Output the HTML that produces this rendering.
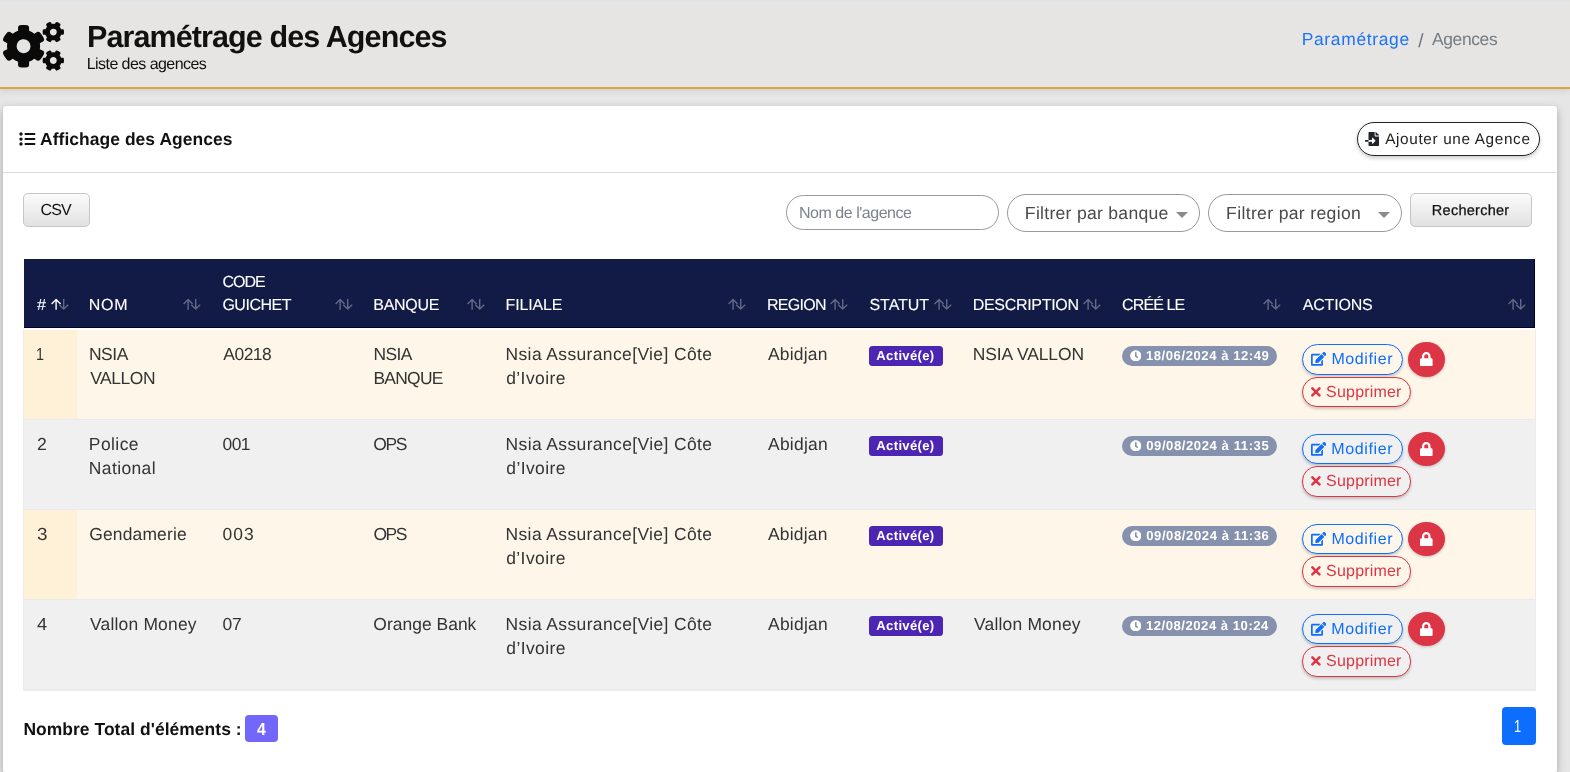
<!DOCTYPE html>
<html lang="fr">
<head>
<meta charset="utf-8">
<title>Paramétrage des Agences</title>
<style>
*{box-sizing:border-box;margin:0;padding:0}
html,body{width:1570px;height:772px;overflow:hidden}
body{background:#e6e6e6;font-family:"Liberation Sans",sans-serif;color:#333;position:relative;text-rendering:geometricPrecision}
.abs{position:absolute}
.nw{white-space:nowrap}
/* header */
#hdr{left:0;top:0;width:1570px;height:89px;background:#e6e5e3;border-bottom:2px solid #d6a646;box-shadow:0 2px 6px rgba(0,0,0,.10)}
#hdrtop{left:0;top:0;width:1570px;height:6px;background:linear-gradient(#e3e3e3 0,#e3e3e3 2px,#e6e6e6 2px,#e6e6e6 5px,#e6e5e3 6px)}
#title{left:87px;top:19px;font-size:30.5px;font-weight:700;color:#111;line-height:36px;letter-spacing:-.07px}
#subtitle{left:87px;top:54px;font-size:16px;color:#111;line-height:20px;letter-spacing:.16px}
#bc1{left:1301px;top:28px;font-size:17.44px;color:#1a73fb;line-height:22px;letter-spacing:.85px}
#bcs{left:1417px;top:30.5px;font-size:19px;color:#6c757d;line-height:22px}
#bc2{left:1431px;top:28px;font-size:17.44px;color:#757c84;line-height:22px;letter-spacing:.45px}
/* card */
#card{left:2.9px;top:105.9px;width:1553.7px;height:667px;background:#fff;border-radius:3.5px;box-shadow:0 3px 9px rgba(0,0,0,.28)}
#cardline{left:3px;top:172px;width:1553px;height:1px;background:#dcdcdc}
#ctitle{left:41px;top:128px;font-size:17.44px;font-weight:700;color:#111;line-height:22px;letter-spacing:.05px}
#addbtn{left:1357px;top:122px;width:183px;height:33.5px;border:1px solid #212529;border-radius:17px;background:#fff;box-shadow:0 2px 4px rgba(0,0,0,.22)}
#addtxt{left:1385px;top:129px;font-size:15.3px;color:#222;line-height:20px;letter-spacing:1.1px}
/* toolbar */
.gbtn{border:1px solid #c6c6c6;border-radius:5px;background:linear-gradient(#fbfbfb,#e1e1e1)}
#csv{left:23px;top:193px;width:67px;height:33.6px}
#csvt{left:40px;top:200px;font-size:16px;color:#111;line-height:20px;letter-spacing:1.2px}
#rech{left:1410px;top:193px;width:121.6px;height:33.6px}
#recht{left:1432px;top:200px;font-size:14.53px;color:#111;line-height:20px;letter-spacing:.15px;-webkit-text-stroke:.25px #111}
#inp{left:786px;top:195px;width:213px;height:34.6px;border:1px solid #9a9a9a;border-radius:18px;background:#fff}
#inpt{left:799px;top:203px;font-size:16px;color:#7b838c;line-height:20px;letter-spacing:.2px}
.sel{top:194px;height:37.7px;border:1px solid #9a9a9a;border-radius:19px;background:#fff}
#sel1{left:1007.3px;width:192.6px}
#sel2{left:1208.4px;width:193.5px}
.selt{top:202px;font-size:17.6px;color:#4a4a4a;line-height:22px;letter-spacing:.75px}
.caret{width:0;height:0;border-left:6px solid transparent;border-right:6px solid transparent;border-top:6px solid #8a8a8a;top:212px}
/* table */
#thead{left:24px;top:259px;width:1511px;height:69px;background:#121b46;border-bottom:1px solid #00002e;border-right:1px solid #00002e}
.th{color:#fff;-webkit-text-stroke:.1px #fff;font-size:16px;font-weight:400;line-height:22px;letter-spacing:.75px;top:294px}
.row{left:24px;width:1511px;border-bottom:1px solid #e9e9ee}
.odd{background:#fff6ea}
.even{background:#f0f0f0}
.s1{left:24px;width:53px;background:#fff0d8}
.td{font-size:17.44px;color:#333;line-height:24px;letter-spacing:.6px}
.bact{width:74px;height:20px;border-radius:3.5px;background:#4c25b2;left:869px}
.bactt{color:#fff;font-size:13.08px;font-weight:700;line-height:20px;letter-spacing:.2px;left:877px}
.bdate{left:1122px;width:155px;height:20px;border-radius:10px;background:#8691ad}
.bdatet{left:1146px;color:#fff;font-size:13.08px;font-weight:700;line-height:20px;letter-spacing:.3px}
.bmod{left:1302px;width:101px;height:31px;border:1px solid #0d6efd;border-radius:16px;box-shadow:0 2px 3px rgba(0,0,0,.2)}
.bmodt{left:1331px;color:#0d6efd;font-size:16px;line-height:20px;letter-spacing:1px}
.bsup{left:1302px;width:109px;height:30px;border:1px solid #dc3545;border-radius:15px;box-shadow:0 2px 3px rgba(0,0,0,.2)}
.bsupt{left:1326px;color:#dc3545;font-size:16px;line-height:20px;letter-spacing:1px}
.block{left:1408px;width:37px;height:35.3px;border-radius:50%;background:#dc3545;box-shadow:0 1px 3px rgba(0,0,0,.22)}
.bgo{background:#fff6ea}
.bge{background:#f0f0f0}
/* footer */
#tot{left:24px;top:718px;font-size:17.44px;font-weight:700;color:#111;line-height:22px;letter-spacing:.3px}
#totbg{left:245px;top:715px;width:33px;height:26.7px;border-radius:4px;background:#7267fa}
#totb{left:256px;top:718px;color:#fff;font-size:17.44px;font-weight:700;line-height:22px}
#pgbg{left:1502px;top:707px;width:34px;height:38px;border-radius:4px;background:#0d6efd}
#pg{left:1514px;top:715px;color:#fff;font-size:17.44px;line-height:22px}
</style>
</head>
<body>
<div id="root" class="abs" style="left:0;top:0;width:1570px;height:772px;overflow:hidden;will-change:transform">
<!-- HEADER -->
<div id="hdr" class="abs"></div>
<div id="hdrtop" class="abs"></div>
<svg class="abs" style="left:3px;top:22.4px" width="61" height="48.8" viewBox="0 0 640 512"><path fill="#0a0a0a" d="M512.1 191l-8.2 14.3c-3 5.300-9.400 7.500-15.100 5.400-11.800-4.400-22.600-10.700-32.100-18.600-4.600-3.800-5.800-10.500-2.800-15.700l8.200-14.300c-6.900-8-12.300-17.300-15.900-27.400h-16.500c-6 0-11.200-4.300-12.200-10.300-2-12-2.100-24.600 0-37.100 1-6 6.200-10.400 12.200-10.400h16.500c3.600-10.100 9-19.400 15.900-27.400l-8.200-14.300c-3-5.200-1.900-11.900 2.800-15.700 9.500-7.900 20.400-14.200 32.100-18.600 5.700-2.100 12.100.1 15.100 5.400l8.200 14.300c10.500-1.900 21.200-1.900 31.700 0L552 6.300c3-5.300 9.400-7.500 15.100-5.400 11.800 4.400 22.600 10.700 32.100 18.600 4.600 3.800 5.800 10.500 2.800 15.700l-8.200 14.300c6.900 8 12.300 17.300 15.900 27.400h16.500c6 0 11.200 4.300 12.200 10.300 2 12 2.100 24.600 0 37.100-1 6-6.200 10.400-12.200 10.400h-16.500c-3.600 10.100-9 19.400-15.900 27.400l8.200 14.300c3 5.200 1.900 11.900-2.800 15.700-9.500 7.900-20.400 14.200-32.100 18.600-5.700 2.100-12.100-.1-15.100-5.400l-8.200-14.300c-10.400 1.900-21.200 1.900-31.700 0zm-10.500-58.800c38.500 29.600 82.400-14.300 52.800-52.800-38.500-29.700-82.400 14.300-52.800 52.800zM386.300 286.100l33.700 16.800c10.100 5.800 14.500 18.100 10.500 29.100-8.900 24.200-26.400 46.400-42.600 65.800-7.400 8.900-20.200 11.100-30.300 5.300l-29.100-16.800c-16 13.700-34.600 24.600-54.900 31.700v33.600c0 11.600-8.300 21.600-19.700 23.600-24.600 4.200-50.400 4.400-75.900 0-11.500-2-20-11.900-20-23.600V418c-20.300-7.200-38.900-18-54.900-31.700L74 403c-10 5.800-22.900 3.600-30.300-5.300-16.200-19.400-33.300-41.600-42.200-65.700-4-10.900.4-23.200 10.500-29.100l33.300-16.800c-3.900-20.900-3.900-42.400 0-63.400L12 205.800c-10.100-5.800-14.600-18.100-10.500-29 8.900-24.200 26-46.400 42.200-65.800 7.400-8.900 20.200-11.100 30.300-5.300l29.100 16.800c16-13.700 34.600-24.600 54.900-31.700V57.100c0-11.500 8.200-21.500 19.600-23.500 24.600-4.200 50.500-4.400 76-.1 11.500 2 20 11.900 20 23.600v33.600c20.300 7.200 38.900 18 54.900 31.700l29.100-16.800c10-5.800 22.900-3.600 30.300 5.300 16.200 19.400 33.200 41.600 42.100 65.800 4 10.900.1 23.200-10 29.100l-33.700 16.800c3.900 21 3.900 42.500 0 63.500zm-117.600 21.100c59.200-77-28.700-164.900-105.700-105.700-59.200 77 28.700 164.900 105.700 105.700zm243.400 182.700l-8.200 14.300c-3 5.300-9.400 7.500-15.100 5.400-11.800-4.400-22.600-10.700-32.100-18.600-4.600-3.800-5.800-10.500-2.800-15.700l8.200-14.300c-6.900-8-12.300-17.300-15.900-27.400h-16.500c-6 0-11.200-4.300-12.200-10.300-2-12-2.100-24.600 0-37.100 1-6 6.200-10.400 12.200-10.400h16.500c3.600-10.100 9-19.400 15.900-27.400l-8.200-14.300c-3-5.200-1.900-11.900 2.800-15.700 9.500-7.900 20.400-14.200 32.100-18.600 5.700-2.100 12.100.1 15.100 5.400l8.200 14.300c10.500-1.900 21.200-1.900 31.700 0l8.200-14.300c3-5.300 9.400-7.500 15.100-5.400 11.800 4.400 22.600 10.700 32.100 18.600 4.600 3.800 5.800 10.500 2.800 15.700l-8.200 14.300c6.900 8 12.300 17.300 15.900 27.400h16.500c6 0 11.200 4.300 12.200 10.300 2 12 2.100 24.600 0 37.100-1 6-6.200 10.400-12.200 10.400h-16.500c-3.600 10.100-9 19.400-15.900 27.400l8.200 14.300c3 5.200 1.900 11.900-2.800 15.700-9.500 7.900-20.400 14.200-32.100 18.600-5.700 2.100-12.100-.1-15.100-5.400l-8.200-14.300c-10.400 1.900-21.200 1.900-31.700 0zM501.600 431c38.500 29.600 82.400-14.300 52.800-52.800-38.500-29.600-82.400 14.300-52.800 52.800z"/></svg>
<div id="title" class="abs nw" style="letter-spacing:-0.898px;left:86.95px;top:18.96px">Paramétrage des Agences</div>
<div id="subtitle" class="abs nw" style="letter-spacing:-0.557px;left:86.73px;top:54.68px">Liste des agences</div>
<div id="bc1" class="abs nw" style="letter-spacing:0.667px;left:1301.69px;top:28.19px">Paramétrage</div>
<div id="bcs" class="abs nw" style="left:1418.16px">/</div>
<div id="bc2" class="abs nw" style="letter-spacing:-0.366px;left:1431.99px;top:28.19px">Agences</div>

<!-- CARD -->
<div id="card" class="abs"></div>
<div id="cardline" class="abs"></div>
<svg class="abs" style="left:19px;top:132px" width="17" height="14" viewBox="0 0 17 14"><g fill="#111"><circle cx="2" cy="2" r="1.7"/><circle cx="2" cy="7.1" r="1.7"/><circle cx="2" cy="12" r="1.7"/><rect x="5.5" y="1.05" width="10.9" height="1.9" rx=".9"/><rect x="5.5" y="6.1" width="10.9" height="1.9" rx=".9"/><rect x="5.5" y="11" width="10.9" height="1.9" rx=".9"/></g></svg>
<div id="ctitle" class="abs nw" style="letter-spacing:0.057px;left:40.05px;top:128.08px">Affichage des Agences</div>
<div id="addbtn" class="abs"></div>
<svg class="abs" style="left:1364.9px;top:132px" width="14" height="14" viewBox="0 0 512 512"><path fill="#212529" d="M16 288c-8.800 0-16 7.200-16 16v32c0 8.800 7.200 16 16 16h112v-64zm489-183L407.100 7c-4.500-4.500-10.600-7-17-7H384v128h128v-6.100c0-6.300-2.500-12.400-7-16.900zm-153 31V0H152c-13.300 0-24 10.700-24 24v264h128v-65.200c0-14.300 17.300-21.400 27.400-11.300L379 308c6.600 6.700 6.600 17.400 0 24l-95.700 96.400c-10.100 10.100-27.400 3-27.400-11.300V352H128v136c0 13.300 10.700 24 24 24h336c13.300 0 24-10.700 24-24V160H376c-13.200 0-24-10.800-24-24z"/></svg>
<div id="addtxt" class="abs nw" style="letter-spacing:0.664px;left:1385.13px;top:129.68px">Ajouter une Agence</div>

<!-- TOOLBAR -->
<div id="csv" class="abs gbtn"></div><div id="csvt" class="abs nw" style="letter-spacing:-0.948px;left:40.62px;top:200.88px">CSV</div>
<div id="inp" class="abs"></div><div id="inpt" class="abs nw" style="letter-spacing:-0.472px;left:799.00px;top:203.72px">Nom de l'agence</div>
<div id="sel1" class="abs sel"></div><div id="selt1" class="abs nw selt" style="left:1025px;letter-spacing:0.272px;left:1024.86px;top:202.15px">Filtrer par banque</div><div class="abs caret" style="left:1176px"></div>
<div id="sel2" class="abs sel"></div><div id="selt2" class="abs nw selt" style="left:1226px;letter-spacing:0.338px;left:1226.09px;top:202.04px">Filtrer par region</div><div class="abs caret" style="left:1378px"></div>
<div id="rech" class="abs gbtn"></div><div id="recht" class="abs nw" style="letter-spacing:0.264px;left:1431.80px;top:200.58px">Rechercher</div>

<!-- TABLE -->
<div class="abs" style="left:23px;top:329px;width:1513px;height:362px;background:#ececee"></div>
<div class="abs" style="left:24px;top:328px;width:1511px;height:2px;background:#fff"></div>
<div id="thead" class="abs"></div>
<div id="th0_0" class="abs nw th" style="left:36px;top:294px;left:36.76px;top:294.91px;transform:scaleX(1.013);transform-origin:0 0">#</div>
<div id="th1_0" class="abs nw th" style="left:88.5px;top:294px;letter-spacing:0.765px;left:88.64px;top:294.91px">NOM</div>
<svg class="abs" style="left:183.0px;top:298px" width="18" height="13" viewBox="0 0 18 13" fill="none" stroke="#fff" stroke-width="1.4" stroke-linejoin="round"><g opacity="0.34"><path d="M5.1 11.8V1.6M0.6 6L5.1 1.6L9.6 6"/></g><g opacity=".34"><path d="M12.7 0.9V11.1M8.2 6.7L12.7 11.1L17.2 6.7"/></g></svg>
<div id="th2_0" class="abs nw th" style="left:221.5px;top:271px;letter-spacing:-0.983px;left:222.44px;top:272.00px">CODE</div>
<div id="th2_1" class="abs nw th" style="left:221.5px;top:294px;letter-spacing:-0.476px;left:222.39px;top:294.91px">GUICHET</div>
<svg class="abs" style="left:334.6px;top:298px" width="18" height="13" viewBox="0 0 18 13" fill="none" stroke="#fff" stroke-width="1.4" stroke-linejoin="round"><g opacity="0.34"><path d="M5.1 11.8V1.6M0.6 6L5.1 1.6L9.6 6"/></g><g opacity=".34"><path d="M12.7 0.9V11.1M8.2 6.7L12.7 11.1L17.2 6.7"/></g></svg>
<div id="th3_0" class="abs nw th" style="left:373px;top:294px;letter-spacing:-0.286px;left:373.26px;top:294.91px">BANQUE</div>
<svg class="abs" style="left:466.7px;top:298px" width="18" height="13" viewBox="0 0 18 13" fill="none" stroke="#fff" stroke-width="1.4" stroke-linejoin="round"><g opacity="0.34"><path d="M5.1 11.8V1.6M0.6 6L5.1 1.6L9.6 6"/></g><g opacity=".34"><path d="M12.7 0.9V11.1M8.2 6.7L12.7 11.1L17.2 6.7"/></g></svg>
<div id="th4_0" class="abs nw th" style="left:505.5px;top:294px;letter-spacing:-0.174px;left:505.61px;top:294.91px">FILIALE</div>
<svg class="abs" style="left:727.9px;top:298px" width="18" height="13" viewBox="0 0 18 13" fill="none" stroke="#fff" stroke-width="1.4" stroke-linejoin="round"><g opacity="0.34"><path d="M5.1 11.8V1.6M0.6 6L5.1 1.6L9.6 6"/></g><g opacity=".34"><path d="M12.7 0.9V11.1M8.2 6.7L12.7 11.1L17.2 6.7"/></g></svg>
<div id="th5_0" class="abs nw th" style="left:766.5px;top:294px;letter-spacing:-0.707px;left:767.00px;top:294.91px">REGION</div>
<svg class="abs" style="left:829.9px;top:298px" width="18" height="13" viewBox="0 0 18 13" fill="none" stroke="#fff" stroke-width="1.4" stroke-linejoin="round"><g opacity="0.34"><path d="M5.1 11.8V1.6M0.6 6L5.1 1.6L9.6 6"/></g><g opacity=".34"><path d="M12.7 0.9V11.1M8.2 6.7L12.7 11.1L17.2 6.7"/></g></svg>
<div id="th6_0" class="abs nw th" style="left:868.5px;top:294px;letter-spacing:-0.034px;left:869.44px;top:294.91px">STATUT</div>
<svg class="abs" style="left:933.9px;top:298px" width="18" height="13" viewBox="0 0 18 13" fill="none" stroke="#fff" stroke-width="1.4" stroke-linejoin="round"><g opacity="0.34"><path d="M5.1 11.8V1.6M0.6 6L5.1 1.6L9.6 6"/></g><g opacity=".34"><path d="M12.7 0.9V11.1M8.2 6.7L12.7 11.1L17.2 6.7"/></g></svg>
<div id="th7_0" class="abs nw th" style="left:972.5px;top:294px;letter-spacing:-0.308px;left:972.76px;top:294.91px">DESCRIPTION</div>
<svg class="abs" style="left:1082.9px;top:298px" width="18" height="13" viewBox="0 0 18 13" fill="none" stroke="#fff" stroke-width="1.4" stroke-linejoin="round"><g opacity="0.34"><path d="M5.1 11.8V1.6M0.6 6L5.1 1.6L9.6 6"/></g><g opacity=".34"><path d="M12.7 0.9V11.1M8.2 6.7L12.7 11.1L17.2 6.7"/></g></svg>
<div id="th8_0" class="abs nw th" style="left:1121.5px;top:294px;letter-spacing:-0.884px;left:1122.06px;top:294.91px">CRÉÉ LE</div>
<svg class="abs" style="left:1263.1px;top:298px" width="18" height="13" viewBox="0 0 18 13" fill="none" stroke="#fff" stroke-width="1.4" stroke-linejoin="round"><g opacity="0.34"><path d="M5.1 11.8V1.6M0.6 6L5.1 1.6L9.6 6"/></g><g opacity=".34"><path d="M12.7 0.9V11.1M8.2 6.7L12.7 11.1L17.2 6.7"/></g></svg>
<div id="th9_0" class="abs nw th" style="left:1301.5px;top:294px;letter-spacing:-0.162px;left:1302.64px;top:294.91px">ACTIONS</div>
<svg class="abs" style="left:1507.7px;top:298px" width="18" height="13" viewBox="0 0 18 13" fill="none" stroke="#fff" stroke-width="1.4" stroke-linejoin="round"><g opacity="0.34"><path d="M5.1 11.8V1.6M0.6 6L5.1 1.6L9.6 6"/></g><g opacity=".34"><path d="M12.7 0.9V11.1M8.2 6.7L12.7 11.1L17.2 6.7"/></g></svg>
<svg class="abs" style="left:50.7px;top:298px" width="18" height="13" viewBox="0 0 18 13" fill="none" stroke="#fff" stroke-width="1.4" stroke-linejoin="round"><g opacity="1"><path d="M5.1 11.8V1.6M0.6 6L5.1 1.6L9.6 6"/></g><g opacity=".34"><path d="M12.7 0.9V11.1M8.2 6.7L12.7 11.1L17.2 6.7"/></g></svg>
<div class="abs row odd" style="top:330px;height:90px"></div>
<div class="abs s1" style="top:330px;height:89px"></div>
<div id="r0_n_0" class="abs nw td" style="left:36.5px;top:342px;left:36.11px;top:342.46px;transform:scaleX(0.822);transform-origin:0 0">1</div>
<div id="r0_nom_0" class="abs nw td" style="left:89px;top:342px;letter-spacing:-0.451px;left:88.96px;top:342.46px">NSIA</div><div id="r0_nom_1" class="abs nw td" style="left:89px;top:366px;letter-spacing:-0.433px;left:90.14px;top:366.46px">VALLON</div>
<div id="r0_code_0" class="abs nw td" style="left:222px;top:342px;letter-spacing:-0.526px;left:223.37px;top:342.46px">A0218</div>
<div id="r0_bq_0" class="abs nw td" style="left:373.5px;top:342px;letter-spacing:-0.591px;left:373.38px;top:342.46px">NSIA</div><div id="r0_bq_1" class="abs nw td" style="left:373.5px;top:366px;letter-spacing:-0.721px;left:373.38px;top:366.46px">BANQUE</div>
<div id="r0_fil_0" class="abs nw td" style="left:506px;top:342px;letter-spacing:0.391px;left:505.54px;top:342.46px">Nsia Assurance[Vie] Côte</div><div id="r0_fil_1" class="abs nw td" style="left:506px;top:366px;letter-spacing:0.444px;left:506.17px;top:366.46px">d’Ivoire</div>
<div id="r0_reg_0" class="abs nw td" style="left:767px;top:342px;letter-spacing:0.205px;left:768.03px;top:342.46px">Abidjan</div>
<div class="abs bact" style="top:346px"></div><div id="r0_act" class="abs nw bactt" style="top:346px;letter-spacing:0.315px;left:876.37px;top:345.88px">Activé(e)</div>
<div id="r0_desc_0" class="abs nw td" style="left:973px;top:342px;letter-spacing:-0.084px;left:972.75px;top:342.46px">NSIA VALLON</div>
<div class="abs bdate" style="top:346px"></div><div id="r0_date" class="abs nw bdatet" style="top:346px;letter-spacing:0.560px;left:1145.91px;top:345.88px">18/06/2024 à 12:49</div>
<svg class="abs" style="left:1129.8px;top:349.8px" width="11.6" height="11.6" viewBox="0 0 512 512"><path fill="#fff" d="M256 8C119 8 8 119 8 256s111 248 248 248 248-111 248-248S393 8 256 8zm57.100 350.100L224.900 294c-3.100-2.300-4.900-5.900-4.900-9.700V116c0-6.600 5.400-12 12-12h48c6.600 0 12 5.400 12 12v137.700l63.500 46.200c5.400 3.900 6.500 11.400 2.600 16.800l-28.200 38.800c-3.900 5.300-11.400 6.500-16.800 2.600z"/></svg>
<div class="abs bmod bgo" style="top:344px;height:31px"></div>
<svg class="abs" style="left:1310.7px;top:352px" width="15.4" height="13.7" viewBox="0 0 576 512"><path fill="#0d6efd" d="M402.600 83.200l90.200 90.200c3.800 3.800 3.800 10 0 13.800L274.400 405.600l-92.800 10.300c-12.400 1.400-22.900-9.100-21.500-21.500l10.300-92.800L388.800 83.200c3.800-3.800 10-3.800 13.800 0zm162-22.900l-48.800-48.800c-15.200-15.200-39.900-15.200-55.200 0l-35.400 35.400c-3.800 3.800-3.800 10 0 13.800l90.200 90.200c3.800 3.800 10 3.800 13.800 0l35.400-35.400c15.200-15.300 15.200-40 0-55.200zM384 346.200V448H64V128h229.800c3.200 0 6.200-1.300 8.500-3.500l40-40c7.600-7.600 2.200-20.500-8.500-20.500H48C21.500 64 0 85.500 0 112v352c0 26.500 21.500 48 48 48h352c26.500 0 48-21.500 48-48V306.200c0-10.700-12.900-16-20.500-8.500l-40 40c-2.200 2.300-3.500 5.300-3.500 8.500z"/></svg>
<div id="r0_mod" class="abs nw bmodt" style="top:349px;letter-spacing:0.599px;left:1331.38px;top:350.44px">Modifier</div>
<div class="abs block" style="top:341.8px;height:35.3px"></div>
<svg class="abs" style="left:1420.2px;top:351.8px" width="12.6" height="14.4" viewBox="0 0 448 512"><path fill="#fff" d="M400 224h-24v-72C376 68.200 307.800 0 224 0S72 68.200 72 152v72H48c-26.500 0-48 21.500-48 48v192c0 26.500 21.500 48 48 48h352c26.500 0 48-21.500 48-48V272c0-26.500-21.500-48-48-48zm-104 0H152v-72c0-39.700 32.300-72 72-72s72 32.300 72 72v72z"/></svg>
<div class="abs bsup bgo" style="top:377.2px;height:29.5px"></div>
<svg class="abs" style="left:1310.8px;top:387px" width="9.8" height="9.8" viewBox="0 0 10 10"><path stroke="#dc3545" stroke-width="2.6" stroke-linecap="round" d="M1.4 1.4L8.6 8.6M8.6 1.4L1.4 8.6"/></svg>
<div id="r0_sup" class="abs nw bsupt" style="top:382px;letter-spacing:0.195px;left:1326.09px;top:382.63px">Supprimer</div>
<div class="abs row even" style="top:420px;height:90px"></div>
<div id="r1_n_0" class="abs nw td" style="left:36.5px;top:432px;left:36.78px;top:432.46px;transform:scaleX(1.013);transform-origin:0 0">2</div>
<div id="r1_nom_0" class="abs nw td" style="left:89px;top:432px;letter-spacing:0.434px;left:88.85px;top:432.46px">Police</div><div id="r1_nom_1" class="abs nw td" style="left:89px;top:456px;letter-spacing:0.384px;left:88.85px;top:456.46px">National</div>
<div id="r1_code_0" class="abs nw td" style="left:222px;top:432px;letter-spacing:-0.546px;left:222.49px;top:432.46px">001</div>
<div id="r1_bq_0" class="abs nw td" style="left:373.5px;top:432px;letter-spacing:-1.370px;left:373.35px;top:432.46px">OPS</div>
<div id="r1_fil_0" class="abs nw td" style="left:506px;top:432px;letter-spacing:0.390px;left:505.62px;top:432.46px">Nsia Assurance[Vie] Côte</div><div id="r1_fil_1" class="abs nw td" style="left:506px;top:456px;letter-spacing:0.411px;left:506.30px;top:456.46px">d’Ivoire</div>
<div id="r1_reg_0" class="abs nw td" style="left:767px;top:432px;letter-spacing:0.242px;left:768.03px;top:432.46px">Abidjan</div>
<div class="abs bact" style="top:436px"></div><div id="r1_act" class="abs nw bactt" style="top:436px;letter-spacing:0.315px;left:876.37px;top:435.88px">Activé(e)</div>
<div class="abs bdate" style="top:436px"></div><div id="r1_date" class="abs nw bdatet" style="top:436px;letter-spacing:0.576px;left:1146.20px;top:435.88px">09/08/2024 à 11:35</div>
<svg class="abs" style="left:1129.8px;top:439.8px" width="11.6" height="11.6" viewBox="0 0 512 512"><path fill="#fff" d="M256 8C119 8 8 119 8 256s111 248 248 248 248-111 248-248S393 8 256 8zm57.100 350.100L224.900 294c-3.100-2.300-4.900-5.900-4.900-9.700V116c0-6.600 5.400-12 12-12h48c6.600 0 12 5.400 12 12v137.700l63.500 46.200c5.400 3.900 6.500 11.400 2.600 16.800l-28.200 38.800c-3.900 5.300-11.400 6.500-16.800 2.600z"/></svg>
<div class="abs bmod bge" style="top:434px;height:29.9px"></div>
<svg class="abs" style="left:1310.7px;top:442px" width="15.4" height="13.7" viewBox="0 0 576 512"><path fill="#0d6efd" d="M402.600 83.200l90.200 90.200c3.800 3.800 3.800 10 0 13.800L274.400 405.600l-92.800 10.300c-12.400 1.400-22.900-9.100-21.500-21.500l10.300-92.800L388.800 83.200c3.800-3.800 10-3.800 13.800 0zm162-22.900l-48.800-48.800c-15.200-15.200-39.900-15.200-55.200 0l-35.400 35.400c-3.800 3.800-3.800 10 0 13.800l90.200 90.200c3.800 3.800 10 3.800 13.800 0l35.400-35.400c15.200-15.300 15.200-40 0-55.200zM384 346.200V448H64V128h229.800c3.200 0 6.200-1.300 8.500-3.500l40-40c7.600-7.600 2.200-20.500-8.500-20.500H48C21.500 64 0 85.500 0 112v352c0 26.500 21.500 48 48 48h352c26.500 0 48-21.500 48-48V306.200c0-10.700-12.900-16-20.500-8.500l-40 40c-2.200 2.300-3.500 5.300-3.500 8.500z"/></svg>
<div id="r1_mod" class="abs nw bmodt" style="top:439px;letter-spacing:0.601px;left:1331.35px;top:440.44px">Modifier</div>
<div class="abs block" style="top:431.7px;height:34.1px"></div>
<svg class="abs" style="left:1420.2px;top:441.8px" width="12.6" height="14.4" viewBox="0 0 448 512"><path fill="#fff" d="M400 224h-24v-72C376 68.200 307.800 0 224 0S72 68.200 72 152v72H48c-26.500 0-48 21.500-48 48v192c0 26.500 21.500 48 48 48h352c26.500 0 48-21.500 48-48V272c0-26.500-21.500-48-48-48zm-104 0H152v-72c0-39.700 32.300-72 72-72s72 32.300 72 72v72z"/></svg>
<div class="abs bsup bge" style="top:466.3px;height:30.4px"></div>
<svg class="abs" style="left:1310.8px;top:476px" width="9.8" height="9.8" viewBox="0 0 10 10"><path stroke="#dc3545" stroke-width="2.6" stroke-linecap="round" d="M1.4 1.4L8.6 8.6M8.6 1.4L1.4 8.6"/></svg>
<div id="r1_sup" class="abs nw bsupt" style="top:472px;letter-spacing:0.190px;left:1326.12px;top:471.63px">Supprimer</div>
<div class="abs row odd" style="top:510px;height:90px"></div>
<div class="abs s1" style="top:510px;height:89px"></div>
<div id="r2_n_0" class="abs nw td" style="left:36.5px;top:522px;left:36.61px;top:522.46px;transform:scaleX(1.081);transform-origin:0 0">3</div>
<div id="r2_nom_0" class="abs nw td" style="left:89px;top:522px;letter-spacing:0.149px;left:89.32px;top:522.46px">Gendamerie</div>
<div id="r2_code_0" class="abs nw td" style="left:222px;top:522px;letter-spacing:1.011px;left:222.49px;top:522.46px">003</div>
<div id="r2_bq_0" class="abs nw td" style="left:373.5px;top:522px;letter-spacing:-1.449px;left:373.44px;top:522.46px">OPS</div>
<div id="r2_fil_0" class="abs nw td" style="left:506px;top:522px;letter-spacing:0.391px;left:505.54px;top:522.46px">Nsia Assurance[Vie] Côte</div><div id="r2_fil_1" class="abs nw td" style="left:506px;top:546px;letter-spacing:0.444px;left:506.17px;top:546.46px">d’Ivoire</div>
<div id="r2_reg_0" class="abs nw td" style="left:767px;top:522px;letter-spacing:0.205px;left:768.03px;top:522.46px">Abidjan</div>
<div class="abs bact" style="top:526px"></div><div id="r2_act" class="abs nw bactt" style="top:526px;letter-spacing:0.315px;left:876.37px;top:525.88px">Activé(e)</div>
<div class="abs bdate" style="top:526px"></div><div id="r2_date" class="abs nw bdatet" style="top:526px;letter-spacing:0.585px;left:1146.20px;top:525.88px">09/08/2024 à 11:36</div>
<svg class="abs" style="left:1129.8px;top:529.8px" width="11.6" height="11.6" viewBox="0 0 512 512"><path fill="#fff" d="M256 8C119 8 8 119 8 256s111 248 248 248 248-111 248-248S393 8 256 8zm57.100 350.100L224.900 294c-3.100-2.300-4.900-5.900-4.900-9.700V116c0-6.600 5.400-12 12-12h48c6.600 0 12 5.400 12 12v137.700l63.500 46.200c5.400 3.900 6.500 11.400 2.600 16.800l-28.200 38.800c-3.900 5.300-11.400 6.500-16.800 2.600z"/></svg>
<div class="abs bmod bgo" style="top:524px;height:29.9px"></div>
<svg class="abs" style="left:1310.7px;top:532px" width="15.4" height="13.7" viewBox="0 0 576 512"><path fill="#0d6efd" d="M402.600 83.200l90.200 90.200c3.800 3.800 3.800 10 0 13.800L274.400 405.600l-92.800 10.300c-12.400 1.400-22.900-9.100-21.500-21.500l10.300-92.800L388.800 83.200c3.800-3.800 10-3.800 13.800 0zm162-22.900l-48.800-48.800c-15.200-15.200-39.900-15.200-55.200 0l-35.400 35.400c-3.800 3.800-3.800 10 0 13.800l90.200 90.200c3.800 3.800 10 3.800 13.800 0l35.400-35.400c15.200-15.300 15.200-40 0-55.200zM384 346.200V448H64V128h229.800c3.200 0 6.200-1.300 8.500-3.500l40-40c7.600-7.600 2.200-20.500-8.500-20.500H48C21.500 64 0 85.500 0 112v352c0 26.500 21.500 48 48 48h352c26.500 0 48-21.500 48-48V306.200c0-10.700-12.900-16-20.500-8.500l-40 40c-2.200 2.300-3.500 5.300-3.500 8.500z"/></svg>
<div id="r2_mod" class="abs nw bmodt" style="top:529px;letter-spacing:0.599px;left:1331.38px;top:530.44px">Modifier</div>
<div class="abs block" style="top:521.7px;height:34.1px"></div>
<svg class="abs" style="left:1420.2px;top:531.8px" width="12.6" height="14.4" viewBox="0 0 448 512"><path fill="#fff" d="M400 224h-24v-72C376 68.200 307.800 0 224 0S72 68.200 72 152v72H48c-26.500 0-48 21.500-48 48v192c0 26.500 21.500 48 48 48h352c26.500 0 48-21.500 48-48V272c0-26.500-21.500-48-48-48zm-104 0H152v-72c0-39.700 32.300-72 72-72s72 32.300 72 72v72z"/></svg>
<div class="abs bsup bgo" style="top:556.3px;height:30.4px"></div>
<svg class="abs" style="left:1310.8px;top:566px" width="9.8" height="9.8" viewBox="0 0 10 10"><path stroke="#dc3545" stroke-width="2.6" stroke-linecap="round" d="M1.4 1.4L8.6 8.6M8.6 1.4L1.4 8.6"/></svg>
<div id="r2_sup" class="abs nw bsupt" style="top:562px;letter-spacing:0.195px;left:1326.09px;top:561.63px">Supprimer</div>
<div class="abs row even" style="top:600px;height:90px"></div>
<div id="r3_n_0" class="abs nw td" style="left:36.5px;top:612px;left:36.76px;top:612.46px;transform:scaleX(1.047);transform-origin:0 0">4</div>
<div id="r3_nom_0" class="abs nw td" style="left:89px;top:612px;letter-spacing:0.198px;left:89.99px;top:612.46px">Vallon Money</div>
<div id="r3_code_0" class="abs nw td" style="left:222px;top:612px;letter-spacing:-0.219px;left:222.49px;top:612.46px">07</div>
<div id="r3_bq_0" class="abs nw td" style="left:373.5px;top:612px;letter-spacing:0.022px;left:373.35px;top:612.46px">Orange Bank</div>
<div id="r3_fil_0" class="abs nw td" style="left:506px;top:612px;letter-spacing:0.390px;left:505.62px;top:612.46px">Nsia Assurance[Vie] Côte</div><div id="r3_fil_1" class="abs nw td" style="left:506px;top:636px;letter-spacing:0.411px;left:506.30px;top:636.46px">d’Ivoire</div>
<div id="r3_reg_0" class="abs nw td" style="left:767px;top:612px;letter-spacing:0.242px;left:768.03px;top:612.46px">Abidjan</div>
<div class="abs bact" style="top:616px"></div><div id="r3_act" class="abs nw bactt" style="top:616px;letter-spacing:0.315px;left:876.37px;top:615.88px">Activé(e)</div>
<div id="r3_desc_0" class="abs nw td" style="left:973px;top:612px;letter-spacing:0.198px;left:973.99px;top:612.46px">Vallon Money</div>
<div class="abs bdate" style="top:616px"></div><div id="r3_date" class="abs nw bdatet" style="top:616px;letter-spacing:0.532px;left:1145.91px;top:615.88px">12/08/2024 à 10:24</div>
<svg class="abs" style="left:1129.8px;top:619.8px" width="11.6" height="11.6" viewBox="0 0 512 512"><path fill="#fff" d="M256 8C119 8 8 119 8 256s111 248 248 248 248-111 248-248S393 8 256 8zm57.100 350.100L224.900 294c-3.100-2.300-4.900-5.900-4.900-9.700V116c0-6.600 5.400-12 12-12h48c6.600 0 12 5.400 12 12v137.700l63.500 46.200c5.400 3.900 6.500 11.400 2.600 16.800l-28.200 38.800c-3.900 5.300-11.400 6.500-16.800 2.600z"/></svg>
<div class="abs bmod bge" style="top:614px;height:29.9px"></div>
<svg class="abs" style="left:1310.7px;top:622px" width="15.4" height="13.7" viewBox="0 0 576 512"><path fill="#0d6efd" d="M402.600 83.200l90.200 90.200c3.800 3.800 3.800 10 0 13.800L274.400 405.600l-92.800 10.300c-12.400 1.400-22.900-9.100-21.500-21.500l10.300-92.800L388.800 83.200c3.800-3.800 10-3.800 13.800 0zm162-22.900l-48.800-48.800c-15.200-15.200-39.900-15.200-55.200 0l-35.400 35.400c-3.800 3.800-3.800 10 0 13.800l90.200 90.200c3.800 3.800 10 3.800 13.800 0l35.400-35.400c15.200-15.300 15.200-40 0-55.200zM384 346.200V448H64V128h229.800c3.200 0 6.200-1.300 8.500-3.500l40-40c7.600-7.600 2.200-20.500-8.500-20.500H48C21.500 64 0 85.500 0 112v352c0 26.500 21.500 48 48 48h352c26.500 0 48-21.500 48-48V306.200c0-10.700-12.900-16-20.500-8.500l-40 40c-2.200 2.300-3.500 5.300-3.500 8.500z"/></svg>
<div id="r3_mod" class="abs nw bmodt" style="top:619px;letter-spacing:0.601px;left:1331.35px;top:620.44px">Modifier</div>
<div class="abs block" style="top:611.7px;height:34.1px"></div>
<svg class="abs" style="left:1420.2px;top:621.8px" width="12.6" height="14.4" viewBox="0 0 448 512"><path fill="#fff" d="M400 224h-24v-72C376 68.200 307.800 0 224 0S72 68.200 72 152v72H48c-26.500 0-48 21.500-48 48v192c0 26.500 21.500 48 48 48h352c26.500 0 48-21.500 48-48V272c0-26.500-21.500-48-48-48zm-104 0H152v-72c0-39.700 32.300-72 72-72s72 32.300 72 72v72z"/></svg>
<div class="abs bsup bge" style="top:646.3px;height:30.4px"></div>
<svg class="abs" style="left:1310.8px;top:656px" width="9.8" height="9.8" viewBox="0 0 10 10"><path stroke="#dc3545" stroke-width="2.6" stroke-linecap="round" d="M1.4 1.4L8.6 8.6M8.6 1.4L1.4 8.6"/></svg>
<div id="r3_sup" class="abs nw bsupt" style="top:652px;letter-spacing:0.190px;left:1326.12px;top:651.63px">Supprimer</div>

<!-- FOOTER -->
<div id="tot" class="abs nw" style="letter-spacing:0.052px;left:23.39px;top:718.29px">Nombre Total d'éléments :</div>
<div id="totbg" class="abs"></div><div id="totb" class="abs nw" style="left:257.12px;top:718.46px;transform:scaleX(0.908);transform-origin:0 0">4</div>
<div id="pgbg" class="abs"></div><div id="pg" class="abs nw" style="left:1514.15px;top:715.29px;transform:scaleX(0.733);transform-origin:0 0">1</div>
</div>
</body>
</html>
